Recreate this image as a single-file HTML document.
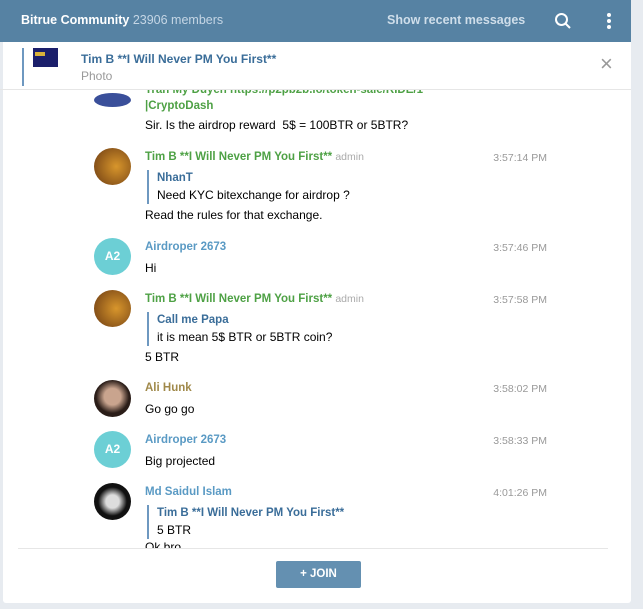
<!DOCTYPE html>
<html><head><meta charset="utf-8"><style>
*{margin:0;padding:0;box-sizing:border-box}
body{width:643px;height:609px;background:#e7ebf0;font-family:"Liberation Sans",Tahoma,sans-serif;font-size:12px;color:#000;position:relative;overflow:hidden}
.hdr{position:absolute;left:0;top:0;width:631px;height:42px;background:#5682a3;color:#fff}
.panel{position:absolute;left:3px;top:42px;width:628px;height:561px;background:#fff;border-radius:0 0 3px 3px}
.a{position:absolute}
.av{position:absolute;left:94px;width:37px;height:37px;border-radius:50%}
.nm{position:absolute;left:145px;font-weight:bold;font-size:11.5px}
.tm{position:absolute;right:96px;color:#999;font-size:10.5px}
.tx{position:absolute;left:145px;font-size:12px}
.q{position:absolute;left:147px;border-left:2px solid #6e98c0;padding-left:8px;height:34px}
.q b{color:#3a6d99;font-size:11.5px;display:block;line-height:16px}
.q span{display:block;line-height:18px}
.g{color:#4ea145}.bl{color:#5a9ac4}.ol{color:#a0894a}
</style></head><body>
<div class="hdr">
 <div class="a" style="left:21px;top:13px;font-weight:bold;font-size:12.5px">Bitrue Community <span style="font-weight:normal;color:#c5d6e5">23906 members</span></div>
 <div class="a" style="left:387px;top:13px;font-weight:bold;color:#cfdeea;font-size:12.5px">Show recent messages</div>
 <svg class="a" style="left:554px;top:12px" width="18" height="18"><circle cx="7.5" cy="7.5" r="5.5" stroke="#fff" stroke-width="2" fill="none"/><line x1="11.5" y1="11.5" x2="16" y2="16" stroke="#fff" stroke-width="2"/></svg>
 <div class="a" style="left:607px;top:13px;width:4px"><div style="width:4px;height:4px;background:#fff;border-radius:2px;margin-bottom:2px"></div><div style="width:4px;height:4px;background:#fff;border-radius:2px;margin-bottom:2px"></div><div style="width:4px;height:4px;background:#fff;border-radius:2px"></div></div>
</div>
<div class="panel"></div>
<div class="a" style="left:0;top:89px;width:631px;height:1px;background:#e6e6e6"></div>
<div class="a" style="left:22px;top:48px;width:2px;height:38px;background:#6e98c0"></div>
<div class="a" style="left:33px;top:48px;width:25px;height:19px;background:#1b1f6b"><div style="margin:4px 2px;width:10px;height:4px;background:#d9b23a"></div></div>
<div class="a" style="left:81px;top:52px;font-weight:bold;color:#3a6d99;font-size:12px">Tim B **I Will Never PM You First**</div>
<div class="a" style="left:81px;top:69px;color:#999">Photo</div>
<div class="a" style="left:600px;top:56px;color:#999;font-size:22px;line-height:16px">×</div>

<div class="a" style="left:0;top:90px;width:631px;height:458px;overflow:hidden">
 <div class="a" style="left:94px;top:3px;width:37px;height:14px;border-radius:50%;background:#3a4f9a"></div>
 <div class="nm g" style="top:-6px">Tran My Duyen https://p2pb2b.io/token-sale/RIDE/1</div>
 <div class="nm g" style="top:10px">|CryptoDash</div>
 <div class="tx" style="top:28px">Sir. Is the airdrop reward&nbsp; 5$ = 100BTR or 5BTR?</div>
 <div class="tx" style="top:450px">Ok bro</div>
</div>

<div class="av" style="top:148px;background:radial-gradient(circle at 60% 50%,#d8962c,#6b3a12)"></div>
<div class="nm g" style="top:151px">Tim B **I Will Never PM You First** <span style="font-weight:normal;color:#aaa;font-size:10.5px">admin</span></div>
<div class="tm" style="top:152px">3:57:14 PM</div>
<div class="q" style="top:170px"><b>NhanT</b><span>Need KYC bitexchange for airdrop ?</span></div>
<div class="tx" style="top:208px">Read the rules for that exchange.</div>

<div class="av" style="top:238px;background:#6ccfd5;color:#fff;font-weight:bold;text-align:center;line-height:37px">A2</div>
<div class="nm bl" style="top:241px">Airdroper 2673</div>
<div class="tm" style="top:242px">3:57:46 PM</div>
<div class="tx" style="top:261px">Hi</div>

<div class="av" style="top:290px;background:radial-gradient(circle at 60% 50%,#d8962c,#6b3a12)"></div>
<div class="nm g" style="top:293px">Tim B **I Will Never PM You First** <span style="font-weight:normal;color:#aaa;font-size:10.5px">admin</span></div>
<div class="tm" style="top:294px">3:57:58 PM</div>
<div class="q" style="top:312px"><b>Call me Papa</b><span>it is mean 5$ BTR or 5BTR coin?</span></div>
<div class="tx" style="top:350px">5 BTR</div>

<div class="av" style="top:380px;background:radial-gradient(circle at 50% 45%,#c9a48e 30%,#2a1d18 60%)"></div>
<div class="nm ol" style="top:382px">Ali Hunk</div>
<div class="tm" style="top:383px">3:58:02 PM</div>
<div class="tx" style="top:402px">Go go go</div>

<div class="av" style="top:431px;background:#6ccfd5;color:#fff;font-weight:bold;text-align:center;line-height:37px">A2</div>
<div class="nm bl" style="top:434px">Airdroper 2673</div>
<div class="tm" style="top:435px">3:58:33 PM</div>
<div class="tx" style="top:454px">Big projected</div>

<div class="av" style="top:483px;background:radial-gradient(circle,#ddd 25%,#111 55%)"></div>
<div class="nm bl" style="top:486px">Md Saidul Islam</div>
<div class="tm" style="top:487px">4:01:26 PM</div>
<div class="q" style="top:505px"><b>Tim B **I Will Never PM You First**</b><span>5 BTR</span></div>

<div class="a" style="left:18px;top:548px;width:590px;height:1px;background:#e6e6e6"></div>
<div class="a" style="left:276px;top:561px;width:85px;height:27px;background:#6490b1;border-radius:2px;color:#fff;font-weight:bold;text-align:center;line-height:27px;font-size:11.5px">+ JOIN</div>
</body></html>
